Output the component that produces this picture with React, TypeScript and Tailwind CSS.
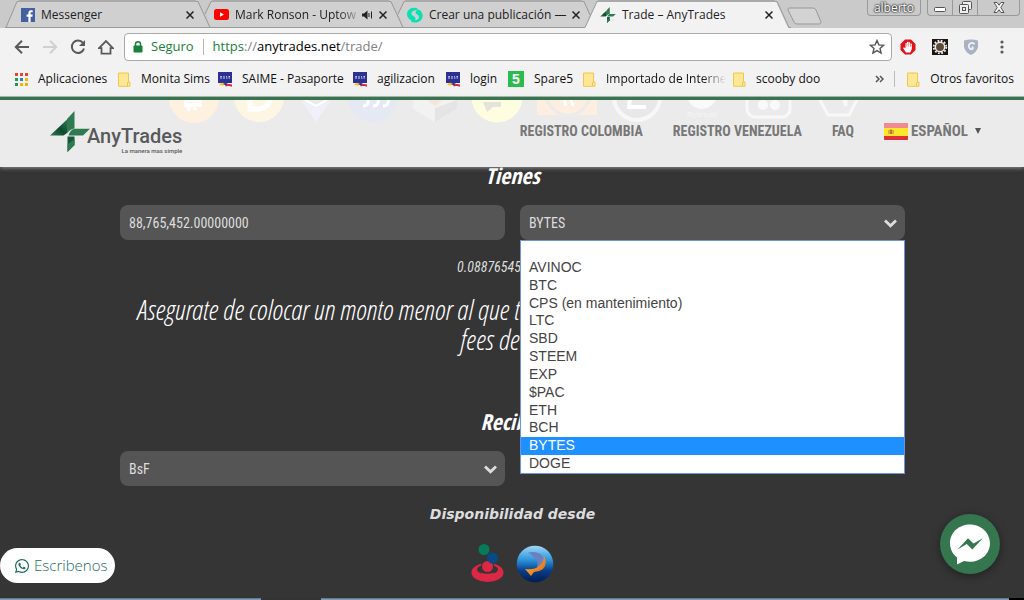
import { useState } from "react";
import type { ReactNode } from "react";
import { FaWhatsapp } from "react-icons/fa";

const COINS = ["", "AVINOC", "BTC", "CPS (en mantenimiento)", "LTC", "SBD", "STEEM", "EXP", "$PAC", "ETH", "BCH", "BYTES", "DOGE"];

/* ---------- small icons ---------- */

function FacebookIcon() {
  return (
    <svg viewBox="0 0 14 14" className="w-3.5 h-3.5 shrink-0">
      <rect width="14" height="14" fill="#4460a0" />
      <path d="M9.600 14V8.700h1.800l.3-2.100H9.600V5.300c0-.6.2-1 1-1h1.100V2.400c-.2 0-.9-.1-1.600-.1-1.700 0-2.700 1-2.700 2.700v1.600H5.600v2.100h1.800V14z" fill="#fff" />
    </svg>
  );
}

function YoutubeIcon() {
  return (
    <svg viewBox="0 0 15 11" className="w-[15px] h-[11px] shrink-0">
      <rect width="15" height="11" rx="2.500" fill="#f00" />
      <path d="M6 3.200v4.600l4-2.300z" fill="#fff" />
    </svg>
  );
}

function SteemitIcon() {
  return (
    <svg viewBox="0 0 16 16" className="w-4 h-4 shrink-0">
      <path d="M0 6C1 2 5 0 9 1c2 .3 2 1 1 1.800 1.500-.3 3 .2 3.800 1.200 2.500 3.500 2.700 7-.3 9.500C11 15.800 8 16 5 15c-1.200-.5-1.500-1.200-.5-1.800C1.500 12.500-.5 9.500 0 6z" fill="#08e1b4" />
      <path d="M4.500 6c1-2 3-3 5.500-2.500-1.700.8-2 2-.8 3.200 1.300 1.300 2.800 1.500 2.800 3.500-.3 2-2 3-4.200 2.800 1-1 1-2.200-.3-3.200C6 8.600 4 8 4.500 6z" fill="#d0d0d0" />
    </svg>
  );
}

function LogoMark({ className }: { className: string }) {
  return (
    <svg viewBox="0 0 40 41" className={className}>
      <defs>
        <linearGradient id="leaf" x1="0" y1="1" x2="1" y2="0">
          <stop offset="0" stopColor="#2f7a50" />
          <stop offset=".5" stopColor="#0d4a31" />
          <stop offset="1" stopColor="#2f7a50" />
        </linearGradient>
      </defs>
      <path d="M0 24.500 17 8.500V22l-3.500 2.500z" fill="url(#leaf)" />
      <path d="M24.500 0v17.500c-3 .5-5.500 2-7.500 5V8z" fill="#2f7a50" />
      <path d="M24.500 17.800H40l-7 6.700H18.500c1-3.700 3-5.900 6-6.700z" fill="#2f7a50" />
      <path d="M17.500 25.500h7V34l-7 7z" fill="#15573a" />
      <path d="M17.500 33.500V41l7-7v-6z" fill="#2f7a50" />
    </svg>
  );
}

function FolderIcon() {
  return (
    <svg viewBox="0 0 13 15" className="w-[13px] h-[15px] shrink-0">
      <path d="M.5 1h10v9h1.500v4.300H.5z" fill="#ffe793" stroke="#ecc853" />
      <path d="M9.500 14v-3.500h1" fill="none" stroke="#ecc853" />
    </svg>
  );
}

function SaimeIcon() {
  return (
    <svg viewBox="0 0 14 15" className="w-3.5 h-[15px] shrink-0">
      <rect width="14" height="11" fill="#2b3192" />
      <path d="M2 6h2M5 6h2M8 6h1.500M10.500 6H12M2.300 4.500h1.500M5.500 4.500h1M8 4.500h.8M10.500 4.500H12" stroke="#d5d8f0" strokeWidth="1.200" />
      <path d="M1 13c2-2.500 4-3 6-1l-2 1.500z" fill="#f5c518" />
      <path d="M5 12c2-1.500 4-1 5 0l-2 1.500z" fill="#2b3192" />
      <path d="M7 13.500c2-1.500 4-2 7-1v2.300c-2-1-4-.8-6-.3z" fill="#e0243a" />
    </svg>
  );
}

function SpareIcon() {
  return (
    <span className="w-4 h-4 shrink-0 bg-[#2cbb4f] text-white text-sm leading-4 font-bold text-center font-['Liberation_Sans',sans-serif]">5</span>
  );
}

function AppsIcon() {
  const colors = ["#ea4335", "#ea4335", "#ea4335", "#1e9b53", "#2a7de1", "#f5b400", "#1e9b53", "#f5b400", "#f5b400"];
  return (
    <svg viewBox="0 0 13 13" className="w-[13px] h-[13px] shrink-0">
      {colors.map((c, i) => (
        <rect key={i} x={(i % 3) * 5} y={Math.floor(i / 3) * 5} width="3" height="3" fill={c} />
      ))}
    </svg>
  );
}

function SpeakerIcon() {
  return (
    <svg viewBox="0 0 11 10" className="w-[11px] h-2.5 shrink-0">
      <path d="M0 3.500h2L5.500.5v9L2 6.500H0z" fill="#222" />
      <path d="M7 3v4M9.500 1.500v7" stroke="#222" />
    </svg>
  );
}

/* ---------- browser window ---------- */

// slanted seam between two neighbouring tabs
function TabSeam({ kind }: { kind: "first" | "middle" | "toActive" | "last" }) {
  return (
    <svg viewBox="0 0 16 28" className="w-4 h-7 shrink-0">
      {kind === "first" && (
        <>
          <path d="M3 28 14 1.500h2V28z" fill="#d0d0d0" />
          <path d="M2 27.500h1L14 1.500h2" fill="none" stroke="#999" />
          <path d="M3 27.500h13" stroke="#999" />
        </>
      )}
      {kind === "middle" && (
        <>
          <path d="M16 1.500 10 14l5 14h1zM0 1.500h1L14 28H0z" fill="#d0d0d0" />
          <path d="M0 1.500h2L14 27.500M9 14 15 1.500h1M0 27.500h16" fill="none" stroke="#999" />
        </>
      )}
      {kind === "toActive" && (
        <>
          <path d="M0 1.500h1L7 14 4 28H0z" fill="#d0d0d0" />
          <path d="M3 28 15 1.500h1V28z" fill="#f2f2f2" />
          <path d="M0 1.500h2L8 15M0 27.500h3L15 1.500h1" fill="none" stroke="#999" />
        </>
      )}
      {kind === "last" && (
        <>
          <path d="M0 1.500h1L13 28H0z" fill="#f2f2f2" />
          <path d="M0 1.500h2L14 27.500h2" fill="none" stroke="#999" />
        </>
      )}
    </svg>
  );
}

function Tab({ icon, title, active, fade, extra }: { icon: ReactNode; title: string; active?: boolean; fade?: boolean; extra?: ReactNode }) {
  return (
    <div
      className={`flex items-center h-7 w-[177px] min-w-0 border-t-2 border-t-[#aaa] pl-0.5 text-xs ${
        active ? "bg-[#f2f2f2]" : "bg-[#d0d0d0] border-b border-b-[#999]"
      }`}
    >
      {icon}
      <span
        className={`ml-1.5 flex-1 min-w-0 whitespace-nowrap ${fade ? "[mask-image:linear-gradient(to_right,black_82%,transparent)]" : ""}`}
      >
        {title}
      </span>
      {extra}
      <button aria-label={`Cerrar ${title}`} className="w-3 h-3 ml-1 shrink-0 flex items-center justify-center">
        <svg viewBox="0 0 8 8" className="w-2 h-2">
          <path d="M.5.5l7 7M7.500.5l-7 7" stroke="#222" strokeWidth="1.500" />
        </svg>
      </button>
    </div>
  );
}

function TabStrip() {
  return (
    <div className="flex h-7 shrink-0 bg-[#cacaca] pl-[3px]">
      <TabSeam kind="first" />
      <Tab icon={<FacebookIcon />} title="Messenger" />
      <TabSeam kind="middle" />
      <Tab icon={<YoutubeIcon />} title="Mark Ronson - Uptow" fade extra={<SpeakerIcon />} />
      <TabSeam kind="middle" />
      <Tab icon={<SteemitIcon />} title="Crear una publicación —" />
      <TabSeam kind="toActive" />
      <Tab icon={<LogoMark className="w-4 h-4 shrink-0" />} title="Trade – AnyTrades" active />
      <TabSeam kind="last" />
      <button aria-label="Nueva pestaña" className="self-center shrink-0 -ml-1 mt-1">
        <svg viewBox="0 0 36 18" className="w-9 h-[18px]">
          <path d="M2 1h24q2 0 3 2l5 12q0 2-2 2H10q-2 0-3-2L1 3q0-2 1-2z" fill="#d3d3d3" stroke="#999" />
        </svg>
      </button>
      <div className="flex-1 flex justify-end items-start gap-1.5 pr-1">
        <button className="h-4 w-[54px] rounded-b border border-t-0 border-[#999] text-xs leading-4 text-white [text-shadow:0_0_2px_#000,0_0_2px_#000]">alberto</button>
        <div className="flex h-4 rounded-b border border-t-0 border-[#999] divide-x divide-[#999]">
          <button aria-label="Minimizar" className="w-[25px] flex items-center justify-center">
            <svg viewBox="0 0 12 5" className="w-3 h-[5px] mt-1">
              <rect x=".5" y=".5" width="11" height="4" rx="1" fill="#fff" stroke="#555" />
            </svg>
          </button>
          <button aria-label="Restaurar" className="w-[25px] flex items-center justify-center">
            <svg viewBox="0 0 13 13" className="w-[13px] h-[13px]" fill="#eee" stroke="#555">
              <rect x="3.500" y=".5" width="9" height="8" rx="1" />
              <rect x=".5" y="3.500" width="9" height="9" rx="1" />
              <rect x="3.500" y="6.500" width="3" height="3" />
            </svg>
          </button>
          <button aria-label="Cerrar" className="w-[41px] flex items-center justify-center">
            <svg viewBox="0 0 12 11" className="w-3 h-[11px]">
              <path d="M1 .5h3l2 2.700L8 .5h3L7.800 5.500 11 10.500H8L6 7.800l-2 2.700H1l3.200-5z" fill="#f4f4f4" stroke="#555" />
            </svg>
          </button>
        </div>
      </div>
    </div>
  );
}

function NavButtons() {
  return (
    <div className="flex items-center gap-3 pl-3.5 pr-2.5">
      <button aria-label="Atrás">
        <svg viewBox="0 0 16 16" className="w-4 h-4" fill="none" stroke="#5a5a5a" strokeWidth="2">
          <path d="M15 8H2.500M8 1.800 1.800 8 8 14.200" />
        </svg>
      </button>
      <button aria-label="Adelante">
        <svg viewBox="0 0 16 16" className="w-4 h-4" fill="none" stroke="#d0d0d0" strokeWidth="2">
          <path d="M1 8h12.500M8 1.800 14.200 8 8 14.200" />
        </svg>
      </button>
      <button aria-label="Recargar">
        <svg viewBox="0 0 16 16" className="w-4 h-4">
          <path d="M13 4A6.200 6.200 0 1 0 14 9.500" fill="none" stroke="#5a5a5a" strokeWidth="2" />
          <path d="M15 1v6H9z" fill="#5a5a5a" />
        </svg>
      </button>
      <button aria-label="Inicio">
        <svg viewBox="0 0 16 16" className="w-4 h-4" fill="none" stroke="#5a5a5a" strokeWidth="1.800">
          <path d="M1 9.200 8 2l7 7.200H12.500v5.400h-9V9.200z" />
        </svg>
      </button>
    </div>
  );
}

function Toolbar() {
  return (
    <div className="flex items-center h-[38px] shrink-0">
      <NavButtons />
      <div className="flex-1 h-7 flex items-center rounded-sm border border-[#a9a9a9] bg-white text-[13px] pl-2 pr-1.5">
        <svg viewBox="0 0 10 12" className="w-2.5 h-3 shrink-0">
          <rect x=".5" y="4.500" width="9" height="7" rx=".8" fill="#188038" />
          <path d="M2.500 5V3.300a2.500 2.500 0 0 1 5 0V5" fill="none" stroke="#188038" strokeWidth="1.500" />
        </svg>
        <span className="ml-2 text-[#188038]">Seguro</span>
        <span className="mx-[9px] h-4 w-px bg-[#b5b5b5]" />
        <span className="flex-1 text-[#808080]">
          <span className="text-[#188038]">https</span>://<span className="text-black">anytrades.net</span>/trade/
        </span>
        <button aria-label="Añadir a favoritos">
          <svg viewBox="0 0 16 16" className="w-4 h-4" fill="none" stroke="#555" strokeWidth="1.400">
            <path d="M8 1.500l1.900 4.400 4.700.4-3.600 3.100 1.100 4.700L8 11.600l-4.100 2.500L5 9.400 1.400 6.300l4.700-.4z" />
          </svg>
        </button>
      </div>
      <div className="flex items-center gap-4 pl-2 pr-3.5">
        <svg viewBox="0 0 16 16" className="w-4 h-4">
          <path d="M5 .5h6L15.500 5v6L11 15.500H5L.5 11V5z" fill="#e0121a" />
          <path d="M6 13.500 3 9l1-.8L5.500 9.500V4h1.200v3.500h.4V2.800h1.300v4.700h.4V3.300H10v4.500h.5V4.600h1.300V10l-1.500 3.500z" fill="#fff" />
        </svg>
        <svg viewBox="0 0 16 16" className="w-4 h-4">
          <rect width="16" height="16" fill="#1c1510" />
          <circle cx="8" cy="8" r="6.300" fill="none" stroke="#eee" strokeWidth="1.800" strokeDasharray="1.800 1.500" />
          <circle cx="8" cy="8" r="4.700" fill="#5b4a35" stroke="#eee" strokeWidth="1.500" />
        </svg>
        <svg viewBox="0 0 14 16" className="w-3.5 h-4">
          <path d="M0 1.500Q7-.5 14 1.500V8q-1 5-7 8Q1 13 0 8z" fill="#a9b2c3" />
          <path d="M10.500 5.200A3.200 3.200 0 1 0 8 10.300Q10 9.500 8 7.500" fill="none" stroke="#f4f4f4" strokeWidth="1.700" />
        </svg>
        <button aria-label="Menú" className="w-4 flex justify-center">
          <svg viewBox="0 0 4 14" className="w-1 h-3.5" fill="#5a5a5a">
            <circle cx="2" cy="2" r="1.600" />
            <circle cx="2" cy="7" r="1.600" />
            <circle cx="2" cy="12" r="1.600" />
          </svg>
        </button>
      </div>
    </div>
  );
}

function Bookmark({ icon, label, width, fade }: { icon: ReactNode; label: string; width: string; fade?: boolean }) {
  return (
    <a href="#" className={`flex items-center gap-2.5 shrink-0 ${width}`}>
      {icon}
      <span className={`whitespace-nowrap ${fade ? "[mask-image:linear-gradient(to_right,black_80%,transparent)]" : ""}`}>{label}</span>
    </a>
  );
}

function BookmarksBar() {
  return (
    <nav aria-label="Favoritos" className="flex items-center h-[31px] shrink-0 pb-1 pl-[15px] pr-2.5 text-xs text-[#111] border-b border-[#aaa]">
      <Bookmark icon={<AppsIcon />} label="Aplicaciones" width="w-[103px]" />
      <Bookmark icon={<FolderIcon />} label="Monita Sims" width="w-[100px]" />
      <Bookmark icon={<SaimeIcon />} label="SAIME - Pasaporte" width="w-[135px]" />
      <Bookmark icon={<SaimeIcon />} label="agilizacion" width="w-[93px]" />
      <Bookmark icon={<SaimeIcon />} label="login" width="w-[62px]" />
      <Bookmark icon={<SpareIcon />} label="Spare5" width="w-[75px]" />
      <Bookmark icon={<FolderIcon />} label="Importado de Interne" width="w-[150px]" fade />
      <Bookmark icon={<FolderIcon />} label="scooby doo" width="w-[100px]" />
      <button aria-label="Más favoritos" className="ml-auto">
        <svg viewBox="0 0 9 8" className="w-[9px] h-2" fill="none" stroke="#555" strokeWidth="1.500">
          <path d="M1 1l3 3-3 3M5 1l3 3-3 3" />
        </svg>
      </button>
      <span className="w-px h-4 bg-[#bbb] ml-2.5 mr-3" />
      <a href="#" className="flex items-center gap-2.5 whitespace-nowrap">
        <FolderIcon />
        Otros favoritos
      </a>
    </nav>
  );
}

/* ---------- site ---------- */

// coin logos of the hero, showing faintly through the header bar
function FadedCoins() {
  return (
    <svg viewBox="0 0 700 24" className="absolute top-0 left-[168px] w-[700px] h-6">
      <circle cx="26" cy="-2" r="25" fill="#fff1e0" />
      <path d="M18 0h14v5H18zM20 5l1 6M27 5v5" fill="none" stroke="#fff" strokeWidth="4" />
      <circle cx="91" cy="-3" r="25" fill="#fcf6e3" />
      <path d="M82-2v11h10q8-1 10-10" fill="none" stroke="#fff" strokeWidth="5" />
      <path d="M133 0l15 22L163 0l-15 8z" fill="#f0f0fa" />
      <path d="M137 0l11 6 11-6" fill="none" stroke="#fff" strokeWidth="2" />
      <circle cx="205" cy="-3" r="25" fill="#e4e9f3" />
      <path d="M195 6q6 0 5-6M205 6q6 0 5-6M215 6q6 0 5-6" fill="none" stroke="#fff" strokeWidth="3" />
      <path d="M245 0h44v9l-22 13-22-13z" fill="#f2f2f2" />
      <path d="M267 8v14l22-13V0z" fill="#e5e5e5" />
      <path d="M259 0h16l-8 6z" fill="#f9e3dc" />
      <circle cx="329" cy="-3" r="25.500" fill="#fffde0" />
      <path d="M315 2h18v5h-8l-6 5z" fill="#e4e4dc" />
      <path d="M369 0h60v15h-60z" fill="#fdeee0" />
      <circle cx="400" cy="-7" r="22" fill="#fdeee0" stroke="#ebebeb" strokeWidth="3" />
      <path d="M396 0l2 6M403 0l2 6" stroke="#fff" strokeWidth="3" />
      <circle cx="469" cy="-3" r="23" fill="#e8e8e8" stroke="#f7f7f7" strokeWidth="4" />
      <path d="M462-2l-1 9h17" fill="none" stroke="#fff" strokeWidth="4" />
      <circle cx="534" cy="-6" r="15" fill="#fafafa" />
      <text x="519" y="17" fontSize="8" fill="#f6f6f6" className="font-['Open_Sans',sans-serif]">Byteball</text>
      <rect x="579" y="-20" width="43" height="37" rx="8" fill="none" stroke="#f8f8f8" strokeWidth="3" />
      <circle cx="595" cy="5" r="5" fill="#fafafa" />
      <circle cx="607" cy="5" r="5" fill="#fafafa" />
      <path d="M651-2l9 17h21l9-17M674-4l4 10V-4" fill="none" stroke="#f8f8f8" strokeWidth="3" />
    </svg>
  );
}

function SpainFlag() {
  return (
    <svg viewBox="0 0 24 17" className="w-6 h-[17px]">
      <rect width="24" height="17" rx="1" fill="#e0313b" />
      <rect width="24" height="5" fill="#ee8a90" />
      <rect y="5" width="24" height="8" fill="#fbe72c" />
      <path d="M4.500 7h1v4h-1zM8.500 7h1v4h-1zM6 6.500h2v4.500H6z" fill="#c4743a" />
    </svg>
  );
}

function SiteHeader() {
  return (
    <header className="relative z-10 flex h-[70px] shrink-0 items-start justify-between border-t-[3px] border-[#35764f] bg-[#ebebeb] pl-[50px] pr-[43px] shadow-[0_1px_4px_rgba(200,200,200,0.6)]">
      <FadedCoins />
      <a href="#" className="relative flex items-start pt-[11px]">
        <LogoMark className="w-10 h-[41px]" />
        <span className="flex flex-col items-end -ml-[3px] pt-3.5 text-[#58595b] font-['Roboto',sans-serif]">
          <span className="text-xl leading-[22px] font-medium">AnyTrades</span>
          <span className="text-[6px] leading-2 font-medium">La manera mas simple</span>
        </span>
      </a>
      <nav className="relative flex items-center gap-[30px] pt-[21px] text-sm font-bold text-[#777] font-['Roboto_Condensed','Liberation_Sans_Narrow',sans-serif]">
        <a href="#">REGISTRO COLOMBIA</a>
        <a href="#">REGISTRO VENEZUELA</a>
        <a href="#">FAQ</a>
        <a href="#" className="flex items-center gap-[3px] text-[15px] leading-5">
          <SpainFlag />
          ESPAÑOL
          <svg viewBox="0 0 6 6" className="w-1.5 h-1.5 ml-1">
            <path d="M0 0h6L3 6z" fill="#555" />
          </svg>
        </a>
      </nav>
    </header>
  );
}

function SelectBox({ label, value, options, onChange }: { label: string; value: string; options: string[]; onChange: (v: string) => void }) {
  return (
    <div className="relative">
      <select
        aria-label={label}
        value={value}
        onChange={(e) => onChange(e.target.value)}
        className="appearance-none block w-full h-[35px] rounded-lg bg-[#555] px-[9px] text-sm text-[#ddd]"
      >
        {options.map((o) => (
          <option key={o}>{o}</option>
        ))}
      </select>
      <svg viewBox="0 0 13 9" className="absolute right-2 top-3.5 w-[13px] h-[9px] pointer-events-none" fill="none" stroke="#ddd" strokeWidth="2.800">
        <path d="M1 1.500l5.500 5.300L12 1.500" />
      </svg>
    </div>
  );
}

function CoinMenu({ selected, onPick }: { selected: string; onPick: (v: string) => void }) {
  return (
    <ul
      role="listbox"
      aria-label="Moneda"
      className="absolute z-20 top-[35px] inset-x-0 h-[234px] grid grid-rows-[repeat(13,1fr)] border border-[#6f95d8] bg-white text-sm leading-4 text-[#444] font-['Liberation_Sans',sans-serif]"
    >
      {COINS.map((c) => (
        <li
          key={c}
          role="option"
          aria-selected={c === selected}
          onClick={() => onPick(c)}
          className={`px-2 min-h-0 ${c === selected ? "bg-[#1e90ff] text-white" : ""}`}
        >
          {c}
        </li>
      ))}
    </ul>
  );
}

function MercantilIcon() {
  return (
    <svg viewBox="0 0 33 39" className="w-[33px] h-[39px]">
      <ellipse cx="16.500" cy="28.500" rx="16" ry="9.500" fill="#dc2844" />
      <ellipse cx="16.500" cy="25.500" rx="10.500" ry="5" fill="#353535" />
      <circle cx="16.500" cy="22.500" r="6.700" fill="#353535" />
      <path d="M10 28.500q6.500 2.500 13 0l-1 3H11z" fill="#dc2844" />
      <circle cx="16.500" cy="22.500" r="5.500" fill="#dc2844" />
      <circle cx="21.500" cy="14" r="5.500" fill="#084a85" />
      <circle cx="13" cy="5.500" r="5.500" fill="#067a5b" />
    </svg>
  );
}

function BlueBallIcon() {
  return (
    <svg viewBox="0 0 38 38" className="w-[38px] h-[38px]">
      <defs>
        <linearGradient id="ball" x1="0" y1="0" x2="0" y2="1">
          <stop offset="0" stopColor="#9fd8f7" />
          <stop offset=".4" stopColor="#2a93d8" />
          <stop offset=".68" stopColor="#0b3c8a" />
          <stop offset="1" stopColor="#021c50" />
        </linearGradient>
        <linearGradient id="flame" x1="0" y1="0" x2="1" y2="1">
          <stop offset="0" stopColor="#ffc23a" />
          <stop offset="1" stopColor="#e2600e" />
        </linearGradient>
      </defs>
      <circle cx="19" cy="19" r="18.300" fill="url(#ball)" />
      <path d="M12 7.500q9-2 14 3 3 5-1 10l-5 4q3-6 0-10-3-4-8-7z" fill="#6c7fc0" />
      <path d="M28 11q4 8-1 13-4 3-9 3l-3 4-6-7q10 1 14-3 5-4 5-10z" fill="url(#flame)" />
    </svg>
  );
}

function TradeForm() {
  const [amount, setAmount] = useState("88,765,452.00000000");
  const [coin, setCoin] = useState("BYTES");
  const [target, setTarget] = useState("BsF");
  const heading = "text-center text-[22px] leading-4 font-bold italic text-white font-['Open_Sans_Condensed','Liberation_Sans_Narrow',sans-serif]";

  return (
    <main className="flex-1 min-h-0 bg-[#353535] pl-[120px] pr-[119px] text-[#ddd] font-['Roboto_Condensed','Liberation_Sans_Narrow',sans-serif]">
      <h2 className={heading}>Tienes</h2>
      <div className="grid grid-cols-2 gap-[15px] mt-[22px]">
        <input
          aria-label="Monto"
          value={amount}
          onChange={(e) => setAmount(e.target.value)}
          className="h-[35px] min-w-0 rounded-lg bg-[#555] px-[9px] text-sm text-[#ddd]"
        />
        <div className="relative">
          <SelectBox label="Moneda que tienes" value={coin} options={COINS} onChange={setCoin} />
          <CoinMenu selected={coin} onPick={setCoin} />
        </div>
      </div>
      <p className="mt-[17px] pl-[337px] text-sm italic">0.08876545</p>
      <p className="mt-[17px] pl-[17px] text-[28px] leading-[30px] font-light italic text-white font-['Open_Sans_Condensed_Light','Roboto_Condensed',sans-serif]">
        Asegurate de colocar un monto menor al que ti
        <span className="block pl-[323px]">fees de</span>
      </p>
      <h2 className={`${heading} mt-[59px]`}>Recibes</h2>
      <div className="grid grid-cols-2 gap-[15px] mt-[22px]">
        <SelectBox label="Moneda que recibes" value={target} options={["BsF", "COP"]} onChange={setTarget} />
      </div>
      <p className="mt-[18px] text-center text-sm font-bold italic font-['DejaVu_Sans',sans-serif]">Disponibilidad desde</p>
      <div className="flex justify-center items-end gap-3 mt-5">
        <MercantilIcon />
        <BlueBallIcon />
      </div>
    </main>
  );
}

export default function App() {
  return (
    <div className="relative flex flex-col h-screen overflow-hidden bg-[#f2f2f2] text-[#222] font-['Open_Sans',sans-serif]">
      <TabStrip />
      <Toolbar />
      <BookmarksBar />
      <SiteHeader />
      <TradeForm />
      <a
        href="#"
        className="absolute left-0 bottom-[17px] flex items-center gap-1 h-[35px] rounded-full bg-white pl-3.5 pr-2 text-[15px] font-light text-[#1a6b5a] font-['Open_Sans',sans-serif]"
      >
        <FaWhatsapp className="w-4 h-4" />
        Escribenos
      </a>
      <button
        aria-label="Messenger"
        className="absolute right-6 bottom-[26px] flex items-center justify-center w-[60px] h-[60px] rounded-full bg-[#35764f] shadow-[0_2px_8px_rgba(0,0,0,0.4)]"
      >
        <svg viewBox="0 0 40 41" className="w-10 h-[41px]">
          <path d="M20 .5C9 .5 0 8.500 0 19c0 6 2.500 11 7 14.500v7l7-3.500c2 .5 4 .8 6 .8 11 0 20-8 20-18.500S31 .5 20 .5z" fill="#fff" />
          <path d="M7.500 25.500 18 14.300l5.500 5.200 9.300-5.200L22.300 25.500 16.800 20z" fill="#35764f" />
        </svg>
      </button>
      {/* top edge of the taskbar */}
      <div className="flex h-0.5 shrink-0">
        <span className="w-[261px] bg-[#6f9fd8] border-t border-[#777]" />
        <span className="w-[60px] bg-[#333]" />
        <span className="flex-1 bg-[#6f9fd8] border-t border-[#777]" />
        <span className="w-[15px] bg-black" />
      </div>
    </div>
  );
}
